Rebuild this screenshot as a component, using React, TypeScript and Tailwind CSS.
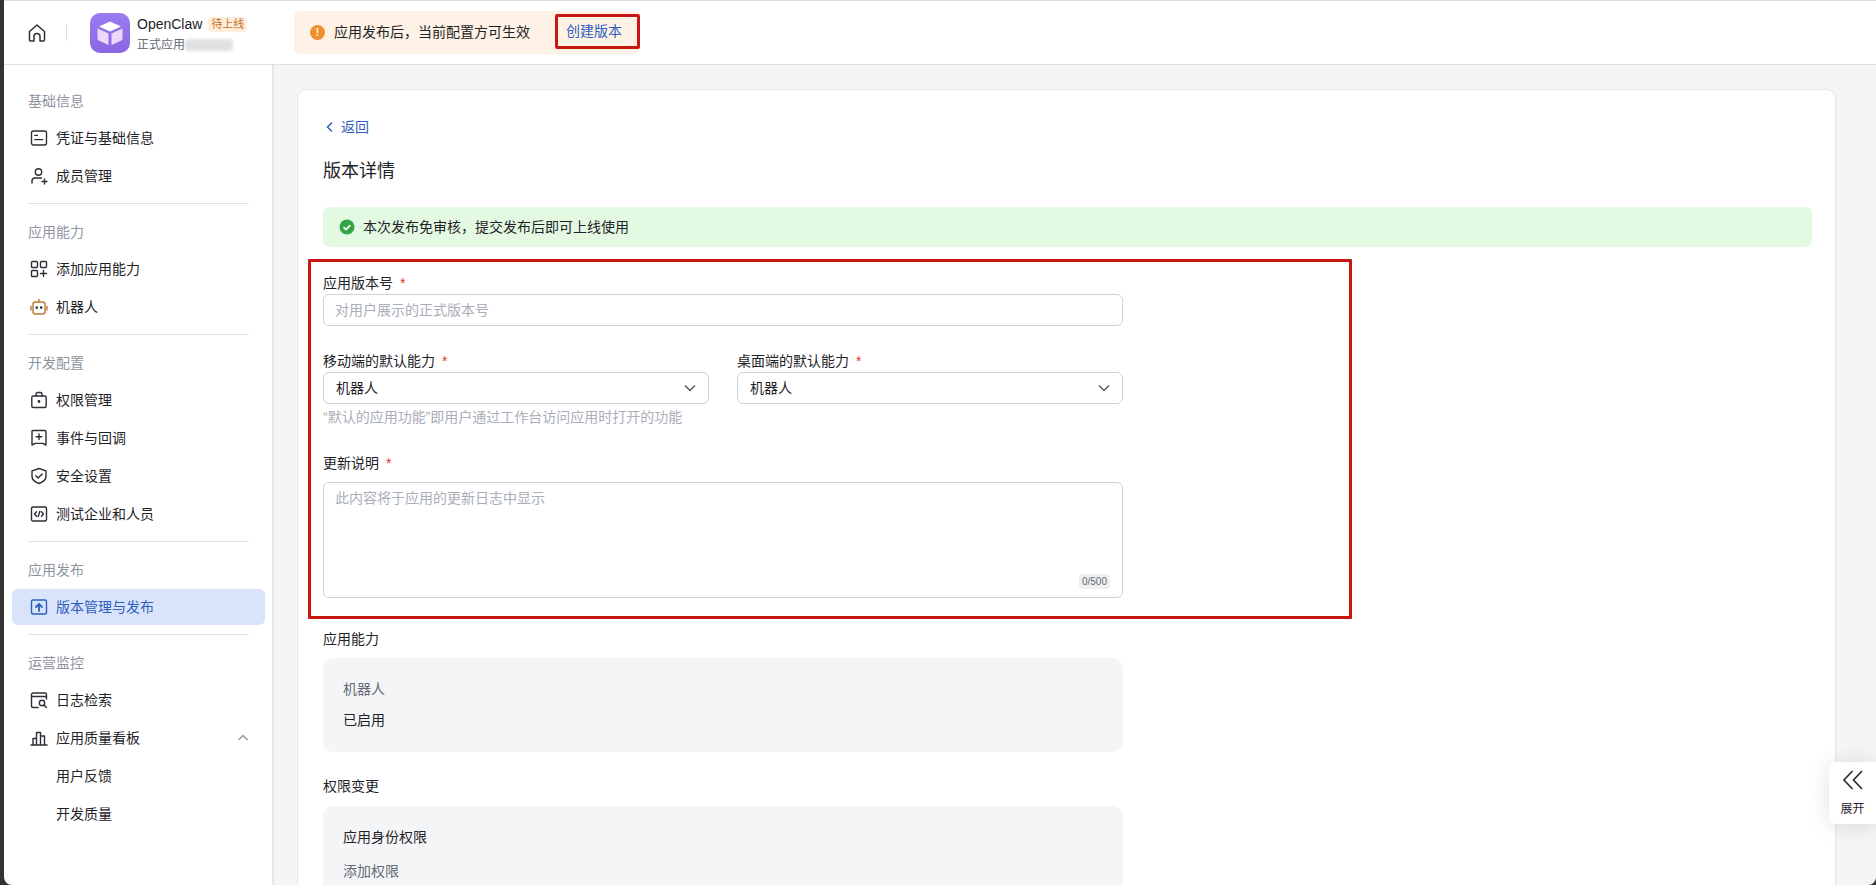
import type { ReactNode } from "react";

const font = "font-['Liberation_Sans','Noto_Sans_CJK_SC',sans-serif]";

function Icon({ children, className }: { children: ReactNode; className?: string }) {
  return (
    <svg
      className={className ?? "h-[18px] w-[18px] shrink-0 text-[#2b2f36]"}
      viewBox="0 0 18 18"
      fill="none"
      stroke="currentColor"
      strokeWidth="1.4"
      strokeLinecap="round"
      strokeLinejoin="round"
    >
      {children}
    </svg>
  );
}

const icons: Record<string, ReactNode> = {
  card: (
    <Icon>
      <rect x="1.5" y="2" width="15" height="14" rx="2" />
      <path d="M4.8 6.4h2.6M4.8 10.6h8" />
    </Icon>
  ),
  member: (
    <Icon>
      <circle cx="8.5" cy="5" r="3.2" />
      <path d="M2 16v-2a3 3 0 0 1 3-3h6.5M12 14.5h5M14.5 12v5" />
    </Icon>
  ),
  apps: (
    <Icon>
      <rect x="1.5" y="1.5" width="6" height="6" rx="1" />
      <rect x="10.5" y="1.5" width="6" height="6" rx="1" />
      <rect x="1.5" y="10.5" width="6" height="6" rx="1" />
      <path d="M10.5 13.5h6M13.5 10.5v6" />
    </Icon>
  ),
  robot: (
    <Icon className="h-[18px] w-[18px] shrink-0 text-[#b9782f]">
      <rect x="3" y="4" width="12" height="12" rx="2.5" />
      <path d="M9 1.5V4M1 8.5v3.5M17 8.5v3.5" />
      <circle cx="6.8" cy="9.6" r=".6" fill="currentColor" stroke="#2b2f36" />
      <circle cx="11.2" cy="9.6" r=".6" fill="currentColor" stroke="#2b2f36" />
    </Icon>
  ),
  lock: (
    <Icon>
      <rect x="1.8" y="5" width="14.4" height="11.5" rx="1.5" />
      <path d="M6 5V3a1.5 1.5 0 0 1 1.5-1.5h3A1.5 1.5 0 0 1 12 3v2" />
      <circle cx="9" cy="10.5" r=".7" fill="currentColor" />
    </Icon>
  ),
  event: (
    <Icon>
      <path d="M2 2.5a1 1 0 0 1 1-1h12a1 1 0 0 1 1 1v13.5l-3.2-1.6H5.2L2 16z" />
      <path d="M6.2 7.8h5.6M9 5v5.6" />
    </Icon>
  ),
  shield: (
    <Icon>
      <path d="M9 1.5l7 2.4v5.4c0 3.6-3.2 6-7 7.2-3.8-1.2-7-3.6-7-7.2V3.900z" />
      <path d="M5.800 8.800l2.300 2.300 4.100-4" />
    </Icon>
  ),
  code: (
    <Icon>
      <rect x="1.500" y="2" width="15" height="14" rx="1.500" />
      <path d="M6.600 6.800L4.500 9l2.100 2.200M11.400 6.800L13.500 9l-2.100 2.200M9.800 6.500L8.200 11.500" />
    </Icon>
  ),
  upload: (
    <Icon className="h-[18px] w-[18px] shrink-0 text-[#2e5fbf]">
      <rect x="1.500" y="2" width="15" height="14" rx="1.500" />
      <path d="M9 13V6.500M6 9l3-3 3 3" strokeWidth="1.800" />
    </Icon>
  ),
  log: (
    <Icon>
      <path d="M16.500 8V3.500a1.500 1.500 0 0 0-1.500-1.500H3a1.500 1.500 0 0 0-1.500 1.500V15A1.500 1.500 0 0 0 3 16.500h5" />
      <path d="M2 5.500h14" />
      <circle cx="12" cy="12" r="2.700" />
      <path d="M14 14l2.500 2.500" />
    </Icon>
  ),
  chart: (
    <Icon>
      <path d="M1 16h16M3 16V9.500h3.500V16M6.500 16V3.500h4V16M10.500 16V7h4v9" />
    </Icon>
  ),
};

type Item = { label: string; icon?: string; active?: boolean; chevron?: boolean };
const groups: { title: string; items: Item[] }[] = [
  {
    title: "基础信息",
    items: [
      { label: "凭证与基础信息", icon: "card" },
      { label: "成员管理", icon: "member" },
    ],
  },
  {
    title: "应用能力",
    items: [
      { label: "添加应用能力", icon: "apps" },
      { label: "机器人", icon: "robot" },
    ],
  },
  {
    title: "开发配置",
    items: [
      { label: "权限管理", icon: "lock" },
      { label: "事件与回调", icon: "event" },
      { label: "安全设置", icon: "shield" },
      { label: "测试企业和人员", icon: "code" },
    ],
  },
  {
    title: "应用发布",
    items: [{ label: "版本管理与发布", icon: "upload", active: true }],
  },
  {
    title: "运营监控",
    items: [
      { label: "日志检索", icon: "log" },
      { label: "应用质量看板", icon: "chart", chevron: true },
      { label: "用户反馈" },
      { label: "开发质量" },
    ],
  },
];

function Sidebar() {
  return (
    <aside className="flex w-[270px] shrink-0 flex-col border-r-2 border-[#e4e6e9] bg-white pl-2 pr-[7px] pt-[25px]">
      {groups.map((g, i) => (
        <div key={g.title}>
          {i > 0 ? <div className="mx-4 mb-[17px] mt-[9px] h-px bg-[#dfe1e5]" /> : null}
          <div className="px-4 text-[14px] leading-[22px] text-[#8f959e]">{g.title}</div>
          <div className="mt-[8px] flex flex-col gap-[2px]">
            {g.items.map((item) => (
              <div
                key={item.label}
                className={
                  item.active
                    ? "flex h-9 items-center gap-[8px] rounded-md bg-[#d9e4fb] px-[18px] text-[14px] text-[#2e5fbf]"
                    : "flex h-9 items-center gap-[8px] rounded-md px-[18px] text-[14px] text-[#1f2329]"
                }
              >
                {item.icon ? icons[item.icon] : <span className="w-[18px] shrink-0" />}
                <span>{item.label}</span>
                {item.chevron ? (
                  <svg className="ml-auto mr-[-3px] h-[14px] w-[14px] text-[#8f959e]" viewBox="0 0 14 14" fill="none" stroke="currentColor" strokeWidth="1.3">
                    <path d="M2.500 9l4.500-4.500L11.500 9" />
                  </svg>
                ) : null}
              </div>
            ))}
          </div>
        </div>
      ))}
    </aside>
  );
}

function Header() {
  return (
    <header className="flex h-[64px] shrink-0 items-center border-b border-[#dee0e3] bg-white">
      <svg className="ml-[23px] h-5 w-5 text-[#2b2f36]" viewBox="0 0 20 20" fill="none" stroke="currentColor" strokeWidth="1.500" strokeLinejoin="round">
        <path d="M2.500 8.500L10 2l7.500 6.500V17a1 1 0 0 1-1 1h-3.500v-4.500a3 3 0 0 0-6 0V18H3.500a1 1 0 0 1-1-1z" />
      </svg>
      <div className="ml-[19px] h-[17px] w-px bg-[#dee0e3]" />
      <svg className="ml-[23px] h-10 w-10 shrink-0" viewBox="0 0 40 40">
        <defs>
          <linearGradient id="logo" x1="0" y1="0" x2="0" y2="1">
            <stop offset="0" stopColor="#9a7bf0" />
            <stop offset="1" stopColor="#8a67e3" />
          </linearGradient>
        </defs>
        <rect width="40" height="40" rx="10" fill="url(#logo)" />
        <path d="M20 8.500l11 5-11 5-11-5z" fill="#ffffff" />
        <path d="M7.500 15.500l11 5V32l-9.800-4.500a2 2 0 0 1-1.200-1.800z" fill="#ead9fb" />
        <path d="M32.500 15.500l-11 5V32l9.800-4.500a2 2 0 0 0 1.200-1.800z" fill="#ead9fb" />
      </svg>
      <div className="ml-[7px] mt-[2px] flex w-[114px] shrink-0 flex-col gap-[3px]">
        <div className="flex items-center">
          <span className="text-[14px] leading-5 text-[#1f2329]">OpenClaw</span>
          <span className="ml-[6px] rounded-[3px] bg-[#fdeedd] px-[3px] text-[11px] leading-[15px] text-[#c8701f]">待上线</span>
        </div>
        <div className="flex items-center">
          <span className="text-[12px] leading-4 text-[#646a73]">正式应用</span>
          <span className="h-3 w-[48px] rounded-sm bg-[#e0e1e3] blur-[1.500px]" />
        </div>
      </div>
      <div className="relative ml-[43px] flex h-[43px] w-[346px] items-center rounded-md bg-[#fdf2e5] pl-[16px]">
        <span className="flex h-[15px] w-[15px] items-center justify-center rounded-full bg-[#f0902d] text-[10px] font-bold leading-none text-white">!</span>
        <span className="ml-[9px] text-[14px] text-[#1f2329]">应用发布后，当前配置方可生效</span>
        <span className="absolute left-[261px] top-[3px] flex h-[35px] w-[85px] items-center rounded-[2px] border-[3px] border-[#c8170f] pl-[8px] text-[14px] text-[#2e5fbf]">创建版本</span>
      </div>
    </header>
  );
}

function Label({ text, className }: { text: string; className?: string }) {
  return (
    <div className={`text-[14px] leading-[22px] text-[#1f2329] ${className ?? ""}`}>
      {text}
      <span className="ml-[7px] text-[#e0352b]">*</span>
    </div>
  );
}

function Select() {
  return (
    <div className="flex h-8 items-center justify-between rounded-md border border-[#d0d3d6] pl-[12px] pr-[11px] text-[14px] text-[#1f2329]">
      机器人
      <svg className="h-[14px] w-[14px] text-[#4e5561]" viewBox="0 0 14 14" fill="none" stroke="currentColor" strokeWidth="1.300">
        <path d="M2 4.500l5 5 5-5" />
      </svg>
    </div>
  );
}

function Form() {
  return (
    <div className="ml-[-15px] mt-[12px] w-[1044px] rounded-[1px] border-[3px] border-[#c8170f] pb-[18px] pl-3 pt-[10px]">
      <div className="w-[800px]">
        <Label text="应用版本号" />
        <div className="flex h-8 items-center rounded-md border border-[#d0d3d6] px-[11px] text-[14px] text-[#a9aeb8]">对用户展示的正式版本号</div>
        <div className="mt-[24px] grid grid-cols-2 gap-[28px]">
          <div>
            <Label text="移动端的默认能力" />
            <Select />
          </div>
          <div>
            <Label text="桌面端的默认能力" />
            <Select />
          </div>
        </div>
        <div className="mt-[2px] text-[14px] leading-[22px] text-[#a9aeb8]">“默认的应用功能”即用户通过工作台访问应用时打开的功能</div>
        <Label text="更新说明" className="mt-[24px]" />
        <div className="relative mt-[8px] h-[116px] rounded-md border border-[#d0d3d6] px-[11px] pt-[4px] text-[14px] leading-[22px] text-[#a9aeb8]">
          此内容将于应用的更新日志中显示
          <span className="absolute bottom-[8px] right-[12px] rounded-[3px] bg-[#eff0f1] px-[3px] text-[10px] leading-[15px] text-[#646a73]">0/500</span>
        </div>
      </div>
    </div>
  );
}

function Main() {
  return (
    <main className="min-w-0 flex-1 overflow-hidden bg-[#f4f5f7] pl-[23px] pr-[40px] pt-[24px]">
      <div className="h-[900px] rounded-t-[10px] border border-[#e4e6e9] bg-white pl-[25px] pr-[23px] pt-[26px]">
        <div className="flex items-center text-[14px] leading-[22px] text-[#2e5fbf]">
          <svg className="mr-[4px] h-[14px] w-[14px]" viewBox="0 0 14 14" fill="none" stroke="currentColor" strokeWidth="1.500">
            <path d="M9 2.500L4.500 7 9 11.500" />
          </svg>
          返回
        </div>
        <h1 className="mt-[17px] text-[18px] font-normal leading-[32px] text-[#1f2329]">版本详情</h1>
        <div className="mt-[20px] flex h-10 items-center rounded-md bg-[#e3f9e2] pl-4 text-[14px] text-[#1f2329]">
          <svg className="mr-[8px] h-4 w-4" viewBox="0 0 16 16">
            <circle cx="8" cy="8" r="7.500" fill="#32a645" />
            <path d="M4.500 8.200l2.500 2.400 4.300-4.500" fill="none" stroke="#ffffff" strokeWidth="1.700" />
          </svg>
          本次发布免审核，提交发布后即可上线使用
        </div>
        <Form />
        <div className="mt-[9px] text-[14px] leading-[22px] text-[#1f2329]">应用能力</div>
        <div className="mt-[8px] h-[94px] w-[800px] rounded-[10px] bg-[#f4f5f7] px-5 pt-5 text-[14px] leading-[22px]">
          <div className="text-[#646a73]">机器人</div>
          <div className="mt-[9px] text-[#1f2329]">已启用</div>
        </div>
        <div className="mt-[23px] text-[14px] leading-[22px] text-[#1f2329]">权限变更</div>
        <div className="mt-[9px] h-[200px] w-[800px] rounded-[10px] bg-[#f4f5f7] px-5 pt-5 text-[14px] leading-[22px]">
          <div className="text-[#1f2329]">应用身份权限</div>
          <div className="mt-[12px] text-[#646a73]">添加权限</div>
        </div>
      </div>
    </main>
  );
}

export default function App() {
  return (
    <div className={`relative h-[885px] w-[1876px] overflow-hidden bg-[#333333] pl-[4px] ${font}`}>
      <div className="flex h-full flex-col overflow-hidden rounded-b-lg border-t border-[#dcdcdc]">
        <Header />
        <div className="flex min-h-0 flex-1">
          <Sidebar />
          <Main />
        </div>
      </div>
      <div className="absolute left-[1829px] top-[762px] flex h-[62px] w-[47px] flex-col items-center rounded-l-lg bg-white pt-[6px] text-[12px] text-[#1f2329] shadow-[0_2px_24px_rgba(0,0,0,0.12)]">
        <svg className="h-6 w-6 text-[#2b2f36]" viewBox="0 0 24 24" fill="none" stroke="currentColor" strokeWidth="1.700">
          <path d="M11.500 3L3 12l8.500 9M21 3l-8.500 9 8.500 9" />
        </svg>
        <span className="mt-[9px] leading-4">展开</span>
      </div>
    </div>
  );
}
